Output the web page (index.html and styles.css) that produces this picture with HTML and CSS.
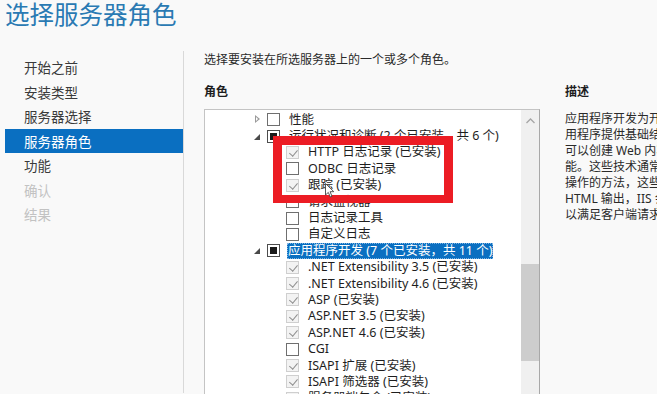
FILE: index.html
```html
<!DOCTYPE html>
<html lang="zh-CN">
<head>
<meta charset="utf-8">
<title>选择服务器角色</title>
<link rel="stylesheet" href="styles.css">
</head>
<body>
<div class="page">
  <header class="header">
    <h1 class="title">选择服务器角色</h1>
  </header>
  <div class="content">
    <nav class="nav">
      <div class="nav-item">开始之前</div>
      <div class="nav-item">安装类型</div>
      <div class="nav-item">服务器选择</div>
      <div class="nav-item active">服务器角色</div>
      <div class="nav-item">功能</div>
      <div class="nav-item disabled">确认</div>
      <div class="nav-item disabled">结果</div>
    </nav>
    <main class="main">
      <p class="intro">选择要安装在所选服务器上的一个或多个角色。</p>
      <div class="columns">
        <section class="roles">
          <h2 class="heading">角色</h2>
          <div class="tree-box">
            <div class="tree-view">
              <ul class="tree">
                <li class="row parent"><span class="exp open-no"></span><span class="cb"></span><span class="label">性能</span></li>
                <li class="row parent"><span class="exp open"></span><span class="cb partial"></span><span class="label">运行状况和诊断 (2 个已安装，共 6 个)</span></li>
                <li class="row child"><span class="cb checked"></span><span class="label">HTTP 日志记录 (已安装)</span></li>
                <li class="row child"><span class="cb"></span><span class="label">ODBC 日志记录</span></li>
                <li class="row child"><span class="cb checked"></span><span class="label">跟踪 (已安装)</span></li>
                <li class="row child"><span class="cb"></span><span class="label">请求监视器</span></li>
                <li class="row child"><span class="cb"></span><span class="label">日志记录工具</span></li>
                <li class="row child"><span class="cb"></span><span class="label">自定义日志</span></li>
                <li class="row parent"><span class="exp open"></span><span class="cb partial"></span><span class="label selected">应用程序开发 (7 个已安装，共 11 个)</span></li>
                <li class="row child"><span class="cb checked"></span><span class="label">.NET Extensibility 3.5 (已安装)</span></li>
                <li class="row child"><span class="cb checked"></span><span class="label">.NET Extensibility 4.6 (已安装)</span></li>
                <li class="row child"><span class="cb checked"></span><span class="label">ASP (已安装)</span></li>
                <li class="row child"><span class="cb checked"></span><span class="label">ASP.NET 3.5 (已安装)</span></li>
                <li class="row child"><span class="cb checked"></span><span class="label">ASP.NET 4.6 (已安装)</span></li>
                <li class="row child"><span class="cb"></span><span class="label">CGI</span></li>
                <li class="row child"><span class="cb checked"></span><span class="label">ISAPI 扩展 (已安装)</span></li>
                <li class="row child"><span class="cb checked"></span><span class="label">ISAPI 筛选器 (已安装)</span></li>
                <li class="row child"><span class="cb checked"></span><span class="label">服务器端包含 (已安装)</span></li>
              </ul>
            </div>
            <div class="scrollbar">
              <div class="sb-up">
                <svg width="9" height="6" viewBox="0 0 9 6"><path d="M0.5 5 L4.5 1 L8.5 5" fill="none" stroke="#a6a6a6" stroke-width="1.3"/></svg>
              </div>
              <div class="sb-track-top"></div>
              <div class="sb-thumb"></div>
              <div class="sb-track-bottom"></div>
            </div>
          </div>
        </section>
        <section class="desc">
          <h2 class="heading">描述</h2>
          <div class="desc-text">
            <div class="line">应用程序开发为开发和承载 Web 应</div>
            <div class="line">用程序提供基础结构。使用这些功能</div>
            <div class="line">可以创建 Web 内容或扩展 IIS 的功</div>
            <div class="line">能。这些技术通常提供一种执行动态</div>
            <div class="line">操作的方法，这些动态操作会生成</div>
            <div class="line">HTML 输出，IIS 会将这些输出发送</div>
            <div class="line">以满足客户端请求。</div>
          </div>
        </section>
      </div>
    </main>
  </div>
  <div class="annotation"></div>
  <svg class="cursor" width="10" height="15" viewBox="0 0 10 15"><path d="M0.5 0.5 L0.5 12 L3.3 9.4 L5.3 14 L7 13.3 L5.1 8.7 L8.8 8.7 Z" fill="#fff" stroke="#444" stroke-width="0.9"/></svg>
</div>
</body>
</html>
```

FILE: styles.css
```css
* { box-sizing: border-box; }
html, body {
  margin: 0;
  padding: 0;
  width: 657px;
  height: 394px;
  overflow: hidden;
  background: #f9f9f9;
}
body {
  font-family: "Noto Sans", "Noto Sans CJK SC", sans-serif;
  color: #1e1e1e;
}
.page {
  position: relative;
  width: 657px;
  height: 394px;
  overflow: hidden;
}
.header {
  height: 52px;
  padding-left: 5px;
}
.title {
  margin: 0;
  font-family: "Noto Sans CJK SC", sans-serif;
  font-weight: 400;
  font-size: 24.5px;
  line-height: 30px;
  margin-top: -1px;
  color: #2a7ab3;
}
.content {
  display: flex;
  height: 342px;
}
.nav {
  width: 179px;
  margin-left: 5px;
  border-right: 1px solid #d9d9d9;
  padding-top: 4px;
  flex-shrink: 0;
}
.nav-item {
  height: 24.5px;
  line-height: 24.5px;
  padding-left: 19px;
  font-family: "Noto Sans CJK SC", sans-serif;
  font-size: 13.5px;
  color: #3a3a3a;
}
.nav-item.active {
  background: #0a6fc1;
  color: #ffffff;
}
.nav-item.disabled {
  color: #c2c2c2;
}
.main {
  padding-left: 20px;
  flex: 1;
  min-width: 0;
}
.intro {
  margin: 0;
  font-size: 12px;
  line-height: 16px;
  font-family: "Noto Sans CJK SC", sans-serif;
  color: #2a2a2a;
}
.columns {
  display: flex;
  margin-top: 16px;
}
.heading {
  margin: 0;
  font-size: 12px;
  line-height: 16px;
  font-weight: 700;
  font-family: "Noto Sans CJK SC", sans-serif;
  color: #1e1e1e;
}
.roles {
  width: 336px;
  flex-shrink: 0;
}
.tree-box {
  margin-top: 10px;
  height: 300px;
  border: 1px solid #c4c4c4;
  border-right-color: #a8a8a8;
  background: #ffffff;
  display: flex;
}
.tree-view {
  flex: 1;
  margin-top: 3px;
  overflow: hidden;
}
.tree {
  list-style: none;
  margin: -1.5px 0 0 0;
  padding: 0;
}
.row {
  display: flex;
  align-items: center;
  height: 16.4px;
  font-size: 12.5px;
  white-space: nowrap;
  color: #1e1e1e;
}
.row.parent { padding-left: 48px; }
.row.child { padding-left: 81px; }
.exp {
  width: 14px;
  height: 13px;
  position: relative;
  flex-shrink: 0;
}
.exp.open::before {
  content: "";
  position: absolute;
  left: 1px;
  top: 4px;
  border-style: solid;
  border-width: 0 0 6px 6px;
  border-color: transparent transparent #4a4a4a transparent;
}
.exp.open-no::before {
  content: "";
  position: absolute;
  left: 2px;
  top: 2px;
  width: 0;
  height: 0;
  border-style: solid;
  border-width: 4.5px 0 4.5px 5px;
  border-color: transparent transparent transparent #9a9a9a;
}
.exp.open-no::after {
  content: "";
  position: absolute;
  left: 3px;
  top: 4px;
  border-style: solid;
  border-width: 2.5px 0 2.5px 2.8px;
  border-color: transparent transparent transparent #ffffff;
}
.cb {
  width: 13px;
  height: 13px;
  border: 1px solid #6f6f6f;
  background: #ffffff;
  flex-shrink: 0;
  position: relative;
}
.cb.partial {
  border-color: #4d4d4d;
}
.cb.partial::after {
  content: "";
  position: absolute;
  left: 2px;
  top: 2px;
  width: 7px;
  height: 7px;
  background: #1a1a1a;
}
.cb.checked {
  border-color: #cfcfcf;
  background: #f3f3f3;
}
.cb.checked::after {
  content: "";
  position: absolute;
  left: 3.5px;
  top: 1px;
  width: 3.5px;
  height: 7px;
  border-right: 1.5px solid #8e8e8e;
  border-bottom: 1.5px solid #8e8e8e;
  transform: rotate(40deg);
}
.label {
  margin-left: 8px;
  line-height: 16px;
  padding: 0 1px;
}
.label.selected {
  margin-left: 7px;
  background: #0a6fc1;
  color: #ffffff;
  outline: 1px dotted #7fb5e3;
  outline-offset: -1px;
}
.scrollbar {
  width: 18px;
  flex-shrink: 0;
  display: flex;
  flex-direction: column;
  background: #f0f0f0;
}
.sb-up {
  height: 19px;
  display: flex;
  align-items: center;
  justify-content: center;
  padding-top: 2px;
}
.sb-track-top { height: 135px; }
.sb-thumb {
  height: 97px;
  background: #cdcdcd;
}
.sb-track-bottom { flex: 1; }
.desc {
  margin-left: 25px;
  flex-shrink: 0;
}
.desc-text {
  margin-top: 12px;
  font-size: 12px;
  line-height: 16px;
  color: #2a2a2a;
}
.line { white-space: nowrap; }
.annotation {
  position: absolute;
  left: 273px;
  top: 136px;
  width: 180px;
  height: 67px;
  border: 9px solid #ec1c24;
  border-bottom-width: 8px;
}
.cursor {
  position: absolute;
  left: 325px;
  top: 183px;
}
```
